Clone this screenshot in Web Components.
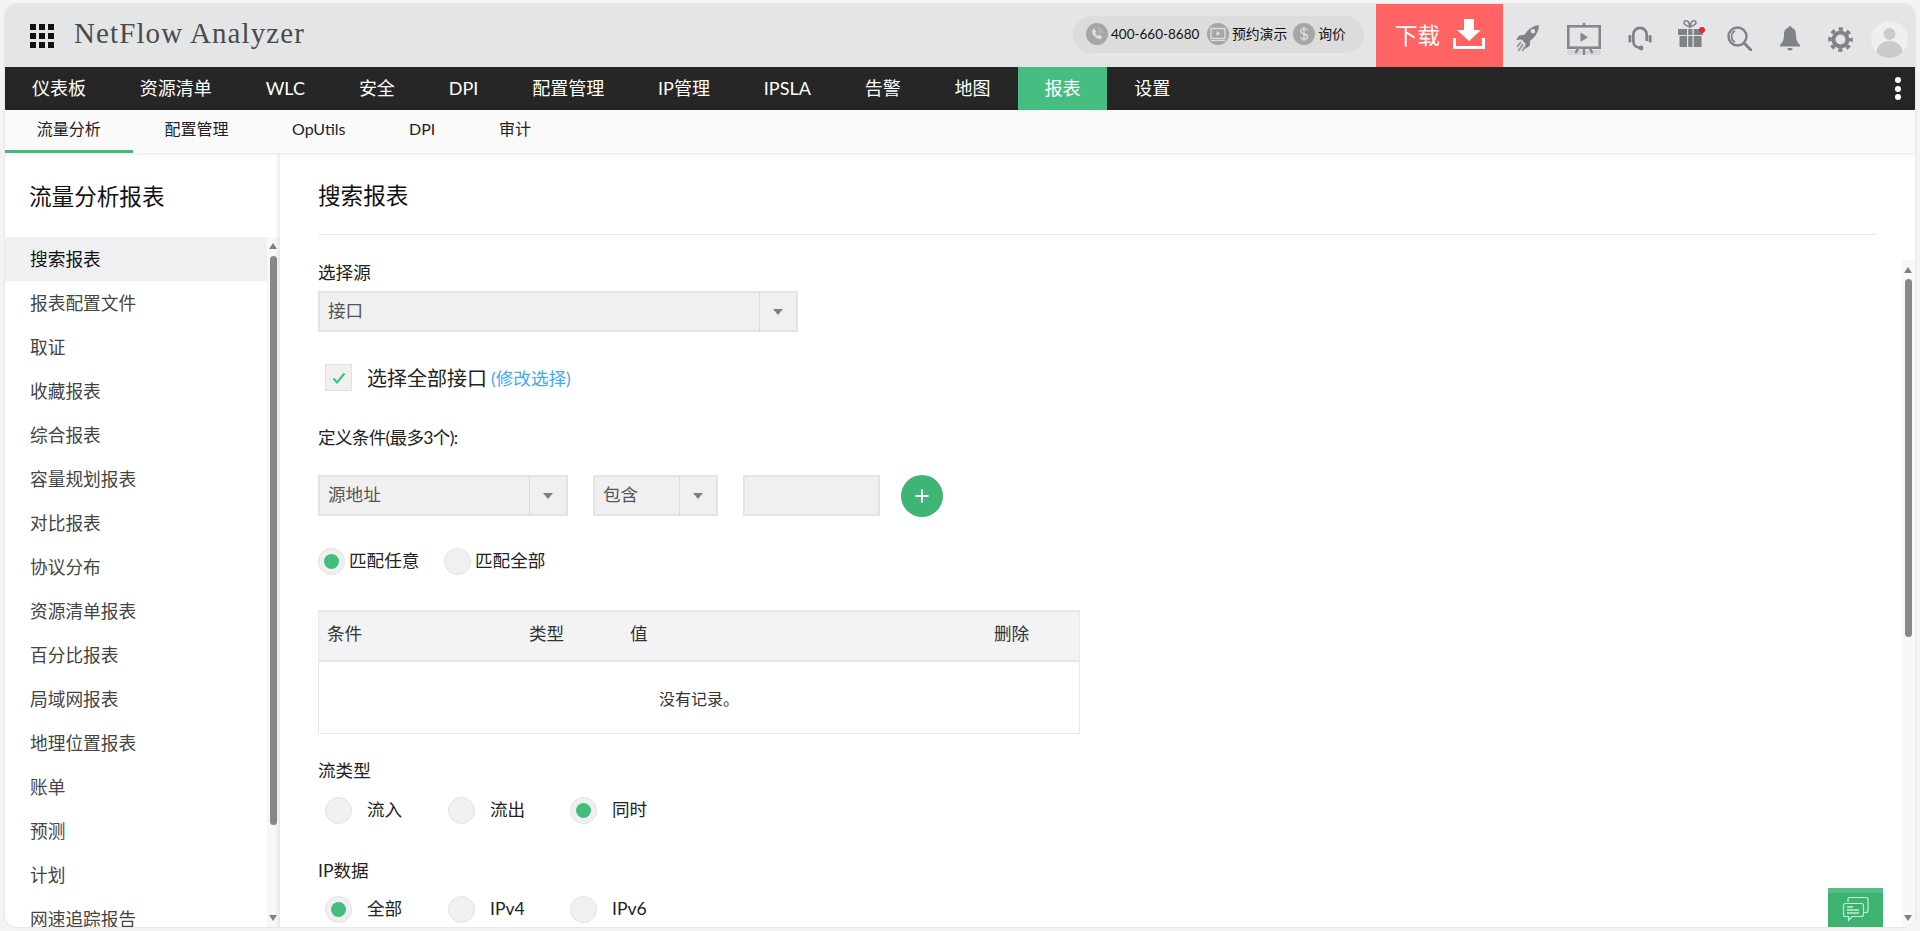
<!DOCTYPE html>
<html lang="zh">
<head>
<meta charset="utf-8">
<title>NetFlow Analyzer</title>
<style>
  html, body { margin: 0; height: 100%; overflow: hidden; }
  body {
    background: #f4f4f4;
    padding: 4px 5px;
    box-sizing: border-box;
    font-family: Lato, "Noto Sans CJK SC", "Noto Sans", sans-serif;
    color: #222;
  }
</style>
</head>
<body>

<nf-app>
  <nf-header></nf-header>
  <nf-nav active="报表" items="仪表板,资源清单,WLC,安全,DPI,配置管理,IP管理,IPSLA,告警,地图,报表,设置"></nf-nav>
  <nf-subnav active="流量分析" items="流量分析,配置管理,OpUtils,DPI,审计"></nf-subnav>
  <nf-body>
    <nf-sidebar title-text="流量分析报表" active="搜索报表"
      items="搜索报表,报表配置文件,取证,收藏报表,综合报表,容量规划报表,对比报表,协议分布,资源清单报表,百分比报表,局域网报表,地理位置报表,账单,预测,计划,网速追踪报告"></nf-sidebar>
    <nf-report></nf-report>
  </nf-body>
</nf-app>

<script>
// shared bits
const GREY = '#7f8386';

class NfApp extends HTMLElement {
  connectedCallback() {
    this.attachShadow({ mode: 'open' });
    this.shadowRoot.innerHTML = `
      <style>
        :host {
          display: flex;
          flex-direction: column;
          height: 923px;
          border-radius: 12px;
          overflow: hidden;
          background: #fff;
          box-shadow: 0 0 2px rgba(0,0,0,.18);
        }
      </style>
      <slot></slot>
    `;
  }
}

class NfHeader extends HTMLElement {
  connectedCallback() {
    this.attachShadow({ mode: 'open' });
    let squares = '';
    for (let i = 0; i < 9; i++) squares += '<i></i>';
    this.shadowRoot.innerHTML = `
      <style>
        :host {
          display: flex;
          align-items: center;
          height: 63px;
          background: #e4e5e7;
          flex: none;
        }
        .grid {
          display: grid;
          grid-template-columns: repeat(3, 6px);
          grid-auto-rows: 6px;
          gap: 3px;
          margin-left: 25px;
          margin-right: 20px;
          margin-top: 1px;
        }
        .grid i { background: #111; }
        .logo {
          font: 29px/1 "Liberation Serif", serif;
          letter-spacing: 1.1px;
          color: #4a4a4c;
          flex: 1;
          margin-top: -5px;
        }
        .pill {
          display: flex;
          align-items: center;
          height: 37px;
          width: 291px;
          box-sizing: border-box;
          padding-left: 13px;
          background: #dcdcdc;
          border-radius: 19px;
          font-size: 13.800px;
          color: #111;
          margin-top: -3px;
        }
        .pill svg { width: 22px; height: 22px; flex: none; }
        .pill span { margin-left: 3px; white-space: nowrap; line-height: 20px; }
        .pill .phone { font-size: 13.500px; margin-right: 7px; width: 89px; }
        .pill .demo { margin-right: 6px; }
        .dl {
          display: flex;
          align-items: center;
          width: 127px;
          height: 63px;
          margin-left: 12px;
          box-sizing: border-box;
          padding-left: 19px;
          background: #ff6363;
          color: #fff;
          font-size: 22.500px;
          line-height: 56px;
        }
        .dl svg { margin-left: 13px; width: 32px; height: 30px; margin-top: -3px; }
        .tools { position: relative; width: 412px; height: 63px; flex: none; display: flex; align-items: center; }
        .tools svg { flex: none; display: block; }
      </style>
      <div class="grid">${squares}</div>
      <div class="logo">NetFlow Analyzer</div>
      <div class="pill">
        <svg viewBox="0 0 22 22"><circle cx="11" cy="11" r="11" fill="#a6a6a6"/><path d="M6 7.500 8 5.500l2.400 3-1.300 1.400c.6 1.300 1.700 2.400 3 3l1.400-1.300 3 2.400-2 2c-4.200.4-8.900-4.300-8.500-8.500z" fill="#dedede"/><path d="M12 5.500a4.500 4.500 0 0 1 4.500 4.500M12 7.800a2.200 2.200 0 0 1 2.200 2.200" fill="none" stroke="#c9c9c9" stroke-width="1"/></svg>
        <span class="phone">400-660-8680</span>
        <svg viewBox="0 0 22 22"><circle cx="11" cy="11" r="11" fill="#a6a6a6"/><rect x="4" y="5.500" width="14" height="10" fill="none" stroke="#dedede" stroke-width="1.400"/><path d="M9.500 8l4 2.500-4 2.500z" fill="#dedede"/><path d="M4 17.500h14" stroke="#dedede" stroke-width="1.200"/></svg>
        <span class="demo">预约演示</span>
        <svg viewBox="0 0 22 22"><circle cx="11" cy="11" r="11" fill="#a6a6a6"/><path d="M14.500 7.500c-.6-1.200-2-1.800-3.500-1.800-1.900 0-3.400 1-3.400 2.600 0 3.500 7 1.900 7 5.300 0 1.700-1.600 2.700-3.600 2.700-1.600 0-3-.7-3.600-2M11 3.800v14.400" fill="none" stroke="#dedede" stroke-width="1.300"/></svg>
        <span>询价</span>
      </div>
      <div class="dl">下载
        <svg viewBox="0 0 32 30"><path d="M11 0h10v11h7L16 22 4 11h7z" fill="#fff"/><path d="M1.500 19v9.500h29V19" fill="none" stroke="#fff" stroke-width="3"/></svg>
      </div>
      <div class="tools">
        <!-- rocket -->
        <svg style="margin-left:13px;margin-top:6px" width="23" height="27" viewBox="0 0 23 27" fill="${GREY}"><path d="M23 0c-5 .8-9 2.800-12 6.500L8.500 9.800 3 10.500 0 15l5.500-.5 4 4L9 24l4.500-3 .8-5.500 3.200-2.500C21 9.200 22.800 5 23 0zm-6 4a2.200 2.200 0 1 1 0 4.400A2.200 2.200 0 0 1 17 4z"/><path d="M5 17 1 22M7 19 2.500 26M9 21.500 6.500 26" stroke="#9a9da0" stroke-width="2" fill="none"/></svg>
        <!-- presentation board -->
        <svg style="margin-left:28px;margin-top:6px" width="34" height="32" viewBox="0 0 34 32" fill="none" stroke="#85888b"><rect x="0" y="27" width="34" height="5" fill="#d6d7d9" stroke="none"/><path d="M17 0v3" stroke-width="2.400"/><rect x="1.300" y="3.300" width="31.400" height="21.400" stroke-width="2.600"/><path d="M13.500 9.500l7.500 4.800-7.500 4.800z" fill="#85888b" stroke="none"/><path d="M17 26v6M11 26l-2.500 4M23 26l2.500 4" stroke-width="2.400"/></svg>
        <!-- headset -->
        <svg style="margin-left:27px;margin-top:6px" width="24" height="25" viewBox="0 0 24 25" fill="none" stroke="${GREY}"><path d="M5.300 16V8.500a6.700 6.700 0 0 1 13.400 0V15" stroke-width="2.800"/><path d="M5.300 15c0 3.500 2 6 6 6.800" stroke-width="2.600"/><rect x="0.500" y="9" width="2.800" height="7.500" rx="1.300" fill="${GREY}" stroke="none"/><rect x="20.700" y="9" width="2.800" height="7.500" rx="1.300" fill="${GREY}" stroke="none"/><circle cx="13" cy="22" r="2.400" fill="${GREY}" stroke="none"/></svg>
        <!-- gift -->
        <svg style="margin-left:26px;margin-top:-4px;overflow:visible" width="25" height="27" viewBox="0 0 25 27"><path d="M12 7C9 6 6 5 6 2.500 6 .5 9 0 10.500 2L12 6.500 13.500 2C15 0 18 .5 18 2.500 18 5 15 6 12 7z" fill="none" stroke="${GREY}" stroke-width="1.600"/><rect x="0" y="9" width="25" height="6" fill="${GREY}"/><rect x="1.500" y="16" width="22" height="11" fill="${GREY}"/><rect x="9" y="9" width="1.200" height="18" fill="#e4e5e7"/><rect x="14.500" y="9" width="1.200" height="18" fill="#e4e5e7"/><circle cx="24" cy="10" r="3" fill="#f0222e"/></svg>
        <!-- search -->
        <svg style="margin-left:24px;margin-top:6px" width="25" height="25" viewBox="0 0 25 25" fill="none" stroke="${GREY}"><circle cx="10.500" cy="10.500" r="9" stroke-width="2.400"/><path d="M8 4.800a6.500 6.500 0 0 0 0 11.400" stroke-width="1.800"/><path d="M17 17l7 7" stroke-width="3" stroke-linecap="round"/></svg>
        <!-- bell -->
        <svg style="margin-left:28px;margin-top:6px" width="20" height="25" viewBox="0 0 20 25" fill="${GREY}"><path d="M10 0c1 0 1.600.7 1.600 1.800C15 2.700 16 5.500 16 9c0 5 1.500 7.500 4 10v1.500H0V19c2.500-2.500 4-5 4-10 0-3.500 1-6.300 4.400-7.200C8.400.7 9 0 10 0z"/><path d="M7.500 22h5a2.500 2.500 0 0 1-5 0z"/></svg>
        <!-- gear -->
        <svg style="margin-left:28px;margin-top:7px" width="25" height="25" viewBox="0 0 25 25" fill="none" stroke="${GREY}"><circle cx="12.500" cy="12.500" r="7" stroke-width="4"/><circle cx="12.500" cy="12.500" r="10.500" stroke-width="3.600" stroke-dasharray="4.200 4.050" stroke-dashoffset="2.100"/></svg>
        <!-- avatar -->
        <svg style="margin-left:18px;margin-top:7px" width="37" height="37" viewBox="0 0 37 37"><defs><clipPath id="av"><circle cx="18.500" cy="18.500" r="18.500"/></clipPath></defs><circle cx="18.500" cy="18.500" r="18.500" fill="#efefef"/><g clip-path="url(#av)" fill="#cbcbcb"><circle cx="18.500" cy="13" r="6"/><ellipse cx="18.500" cy="31" rx="13" ry="11"/></g></svg>
      </div>
    `;
  }
}

class NfNav extends HTMLElement {
  connectedCallback() {
    this.attachShadow({ mode: 'open' });
    const active = this.getAttribute('active');
    const links = this.getAttribute('items').split(',').map(t =>
      `<a class="${t === active ? 'on' : ''}">${t}</a>`).join('');
    this.shadowRoot.innerHTML = `
      <style>
        :host {
          display: flex;
          height: 43px;
          flex: none;
          background: #262626;
          color: #fff;
          font-size: 18px;
          position: relative;
        }
        a {
          display: block;
          padding: 0 26.950px;
          line-height: 43px;
          white-space: nowrap;
        }
        a.on { background: #48bd82; }
        .more {
          position: absolute;
          right: 14px;
          top: 10px;
          display: grid;
          gap: 2.500px;
        }
        .more i { display: block; width: 6px; height: 6px; border-radius: 50%; background: #fff; }
      </style>
      ${links}
      <div class="more"><i></i><i></i><i></i></div>
    `;
  }
}

class NfSubnav extends HTMLElement {
  connectedCallback() {
    this.attachShadow({ mode: 'open' });
    const active = this.getAttribute('active');
    const links = this.getAttribute('items').split(',').map(t =>
      `<a class="${t === active ? 'on' : ''}">${t}</a>`).join('');
    this.shadowRoot.innerHTML = `
      <style>
        :host {
          display: flex;
          height: 43px;
          flex: none;
          background: #fafafa;
          font-size: 16px;
          color: #222;
          box-shadow: 0 1px 3px rgba(0,0,0,.1);
          position: relative;
          z-index: 2;
        }
        a {
          display: block;
          padding: 0 31.800px;
          line-height: 38px;
          height: 43px;
          box-sizing: border-box;
          white-space: nowrap;
        }
        a.on { border-bottom: 3px solid #48b883; }
      </style>
      ${links}
    `;
  }
}

class NfBody extends HTMLElement {
  connectedCallback() {
    this.attachShadow({ mode: 'open' });
    this.shadowRoot.innerHTML = `
      <style>
        :host { display: flex; flex: 1; min-height: 0; background: #fff; }
      </style>
      <slot></slot>
    `;
  }
}

// drawn scrollbar, same look on both panes
class NfScrollbar extends HTMLElement {
  connectedCallback() {
    this.attachShadow({ mode: 'open' });
    this.shadowRoot.innerHTML = `
      <style>
        :host {
          display: flex;
          flex-direction: column;
          align-items: center;
          width: 13px;
          flex: none;
          background: #f8f8f8;
          position: relative;
        }
        .up, .down {
          position: absolute;
          left: 2px;
          width: 0;
          height: 0;
          border-left: 4.500px solid transparent;
          border-right: 4.500px solid transparent;
        }
        .up { top: var(--up-top, 6px); border-bottom: 6px solid #808080; }
        .down { bottom: var(--down-bottom, 6px); border-top: 6px solid #808080; }
        .thumb {
          position: absolute;
          left: 3px;
          width: 7px;
          border-radius: 4px;
          background: #888;
          top: var(--thumb-top);
          height: var(--thumb-height);
        }
      </style>
      <div class="up"></div>
      <div class="thumb"></div>
      <div class="down"></div>
    `;
  }
}

class NfSidebar extends HTMLElement {
  connectedCallback() {
    this.attachShadow({ mode: 'open' });
    const active = this.getAttribute('active');
    const rows = this.getAttribute('items').split(',').map(t =>
      `<li class="${t === active ? 'on' : ''}">${t}</li>`).join('');
    this.shadowRoot.innerHTML = `
      <style>
        :host {
          display: flex;
          flex-direction: column;
          width: 275px;
          flex: none;
          background: #fff;
          min-height: 0;
        }
        h2 {
          margin: 0;
          height: 84px;
          box-sizing: border-box;
          padding: 33px 0 0 24px;
          font-size: 22.600px;
          line-height: 22px;
          font-weight: 400;
          color: #111;
          flex: none;
        }
        .pane { display: flex; flex: 1; min-height: 0; }
        ul { list-style: none; margin: 0; padding: 0; flex: 1; overflow: hidden; }
        li {
          height: 44px;
          line-height: 46px;
          padding-left: 25px;
          font-size: 17.700px;
          color: #444;
        }
        li.on { background: #f0f0f2; color: #111; }
        nf-scrollbar { --thumb-top: 19px; --thumb-height: 569px; --up-top: 6px; --down-bottom: 6px; }
      </style>
      <h2>${this.getAttribute('title-text')}</h2>
      <div class="pane">
        <ul>${rows}</ul>
        <nf-scrollbar></nf-scrollbar>
      </div>
    `;
  }
}

class NfSelect extends HTMLElement {
  connectedCallback() {
    this.attachShadow({ mode: 'open' });
    this.shadowRoot.innerHTML = `
      <style>
        :host {
          display: flex;
          align-items: center;
          height: 41px;
          box-sizing: border-box;
          background: #f0f0f0;
          border: 2px solid #e4e4e4;
          font-size: 17.600px;
          color: #555;
          position: relative;
          flex: none;
        }
        .v { flex: 1; padding-left: 8px; line-height: 35px; height: 37px; }
        .arrow {
          width: 37px;
          height: 41px;
          margin: -2px 0;
          box-sizing: border-box;
          border-left: 1px solid #dcdcdc;
          display: flex;
          align-items: center;
          justify-content: center;
        }
        .arrow::after {
          content: "";
          border-left: 5px solid transparent;
          border-right: 5px solid transparent;
          border-top: 6px solid #808080;
        }
      </style>
      <div class="v"><slot></slot></div>
      <div class="arrow"></div>
    `;
  }
}

class NfRadio extends HTMLElement {
  connectedCallback() {
    this.attachShadow({ mode: 'open' });
    this.shadowRoot.innerHTML = `
      <style>
        :host {
          display: inline-flex;
          align-items: center;
          height: 27px;
          font-size: 17.600px;
          color: #222;
          white-space: nowrap;
        }
        .c {
          width: 27px;
          height: 27px;
          box-sizing: border-box;
          border-radius: 50%;
          background: #f0f0f0;
          border: 1px solid #e2e2e2;
          display: flex;
          align-items: center;
          justify-content: center;
          margin-right: var(--radio-gap, 15px);
          flex: none;
        }
        :host([checked]) .c::after {
          content: "";
          width: 15px;
          height: 15px;
          border-radius: 50%;
          background: #41bd7e;
        }
        .t { line-height: 25px; height: 27px; }
      </style>
      <div class="c"></div><div class="t"><slot></slot></div>
    `;
  }
}

class NfCheck extends HTMLElement {
  connectedCallback() {
    this.attachShadow({ mode: 'open' });
    this.shadowRoot.innerHTML = `
      <style>
        :host {
          display: flex;
          align-items: center;
          height: 27px;
          padding-left: 7px;
          font-size: 20px;
          color: #222;
        }
        .b {
          width: 27px;
          height: 27px;
          box-sizing: border-box;
          background: #f0f0f0;
          border: 1px solid #e0e0e0;
          display: flex;
          align-items: center;
          justify-content: center;
          margin-right: 15px;
        }
        ::slotted(a) { color: #45a9f2; font-size: 17.600px; margin-left: 4px; }
      </style>
      <div class="b"><svg width="14" height="12" viewBox="0 0 14 12"><path d="M1.500 6.500l3.500 4L12.500 1.500" fill="none" stroke="#41bd7e" stroke-width="2"/></svg></div>
      <slot></slot>
    `;
  }
}

class NfTable extends HTMLElement {
  connectedCallback() {
    this.attachShadow({ mode: 'open' });
    this.shadowRoot.innerHTML = `
      <style>
        :host {
          display: block;
          width: 762px;
          height: 124px;
          box-sizing: border-box;
          border: 1px solid #e8e8e8;
          border-top-width: 2px;
        }
        .head {
          display: grid;
          grid-template-columns: 202px 101px 364px 1fr;
          height: 50px;
          line-height: 44px;
          padding-left: 8px;
          box-sizing: border-box;
          background: #f3f3f5;
          border-bottom: 2px solid #e6e6e6;
          font-size: 17.600px;
          color: #333;
        }
        .empty {
          text-align: center;
          line-height: 74px;
          font-size: 16px;
          color: #333;
        }
      </style>
      <div class="head"><span>条件</span><span>类型</span><span>值</span><span>删除</span></div>
      <div class="empty">没有记录。</div>
    `;
  }
}

class NfReport extends HTMLElement {
  connectedCallback() {
    this.attachShadow({ mode: 'open' });
    this.shadowRoot.innerHTML = `
      <style>
        :host {
          display: flex;
          flex-direction: column;
          flex: 1;
          min-width: 0;
          background: #fff;
          box-shadow: -2px 0 5px rgba(0,0,0,.09);
          position: relative;
        }
        .top {
          height: 82px;
          margin: 0 38px 25px 38px;
          box-sizing: border-box;
          border-bottom: 1px solid #eaeaea;
          flex: none;
        }
        h1 {
          margin: 0;
          padding-top: 32px;
          font-size: 22.600px;
          line-height: 22px;
          font-weight: 400;
          color: #111;
        }
        .pane { display: flex; flex: 1; min-height: 0; }
        form { flex: 1; padding: 2px 0 0 38px; overflow: hidden; font-size: 17.600px; color: #222; }
        .lbl { height: 22px; line-height: 22px; }
        .cond { letter-spacing: -.7px; }
        .row { display: flex; align-items: flex-start; }
        nf-scrollbar { --thumb-top: 19px; --thumb-height: 358px; --up-top: 7px; --down-bottom: 6px; }
        .chat {
          position: absolute;
          right: 32px;
          bottom: 0;
          width: 55px;
          height: 39px;
          box-sizing: border-box;
          background: #3cb371;
          border-top: 5px solid #54bf85;
          display: flex;
          align-items: center;
          justify-content: center;
        }
        .opts nf-radio:nth-child(1) { width: 123px; margin-left: 7px; }
        .opts nf-radio:nth-child(2) { width: 122px; }
      </style>
      <div class="top"><h1>搜索报表</h1></div>
      <div class="pane">
        <form>
          <div class="lbl">选择源</div>
          <nf-select style="width:480px;margin-top:7px">接口</nf-select>
          <nf-check style="margin-top:32px">选择全部接口<a>(修改选择)</a></nf-check>
          <div class="lbl cond" style="margin-top:36px">定义条件(最多3个):</div>
          <div class="row" style="margin-top:26px">
            <nf-select style="width:250px">源地址</nf-select>
            <nf-select style="width:125px;margin-left:25px">包含</nf-select>
            <nf-select class="blank" style="width:137px;margin-left:25px"></nf-select>
            <svg style="margin-left:21px" width="42" height="42" viewBox="0 0 42 42"><circle cx="21" cy="21" r="21" fill="#3eb575"/><path d="M21 14.500v13M14.500 21h13" stroke="#fff" stroke-width="2"/></svg>
          </div>
          <div class="row" style="margin-top:31px;height:27px;--radio-gap:4px">
            <nf-radio checked style="width:126px">匹配任意</nf-radio>
            <nf-radio>匹配全部</nf-radio>
          </div>
          <nf-table style="margin-top:35px"></nf-table>
          <div class="lbl" style="margin-top:26px">流类型</div>
          <div class="row opts" style="margin-top:15px">
            <nf-radio>流入</nf-radio><nf-radio>流出</nf-radio><nf-radio checked>同时</nf-radio>
          </div>
          <div class="lbl" style="margin-top:36px">IP数据</div>
          <div class="row opts" style="margin-top:14px">
            <nf-radio checked>全部</nf-radio><nf-radio>IPv4</nf-radio><nf-radio>IPv6</nf-radio>
          </div>
        </form>
        <nf-scrollbar></nf-scrollbar>
      </div>
      <div class="chat">
        <svg width="28" height="28" viewBox="0 0 28 28" fill="none" stroke="#c9ecd8" stroke-width="1.200"><path d="M6 6V3.500Q6 1.500 8 1.500h16q2 0 2 2v11q0 2-2 2h-2"/><path d="M3.500 7.500h16q2 0 2 2v9q0 2-2 2H10l-3.500 4v-4h-3q-2 0-2-2v-9q0-2 2-2z"/><path d="M5 11h6M5 14h12M5 17h12" stroke-width="1.500"/></svg>
      </div>
    `;
    // empty text box has no arrow
    const blank = this.shadowRoot.querySelector('.blank');
    blank.shadowRoot.querySelector('.arrow').style.display = 'none';
  }
}

customElements.define('nf-app', NfApp);
customElements.define('nf-header', NfHeader);
customElements.define('nf-nav', NfNav);
customElements.define('nf-subnav', NfSubnav);
customElements.define('nf-body', NfBody);
customElements.define('nf-scrollbar', NfScrollbar);
customElements.define('nf-sidebar', NfSidebar);
customElements.define('nf-select', NfSelect);
customElements.define('nf-radio', NfRadio);
customElements.define('nf-check', NfCheck);
customElements.define('nf-table', NfTable);
customElements.define('nf-report', NfReport);
</script>
</body>
</html>
